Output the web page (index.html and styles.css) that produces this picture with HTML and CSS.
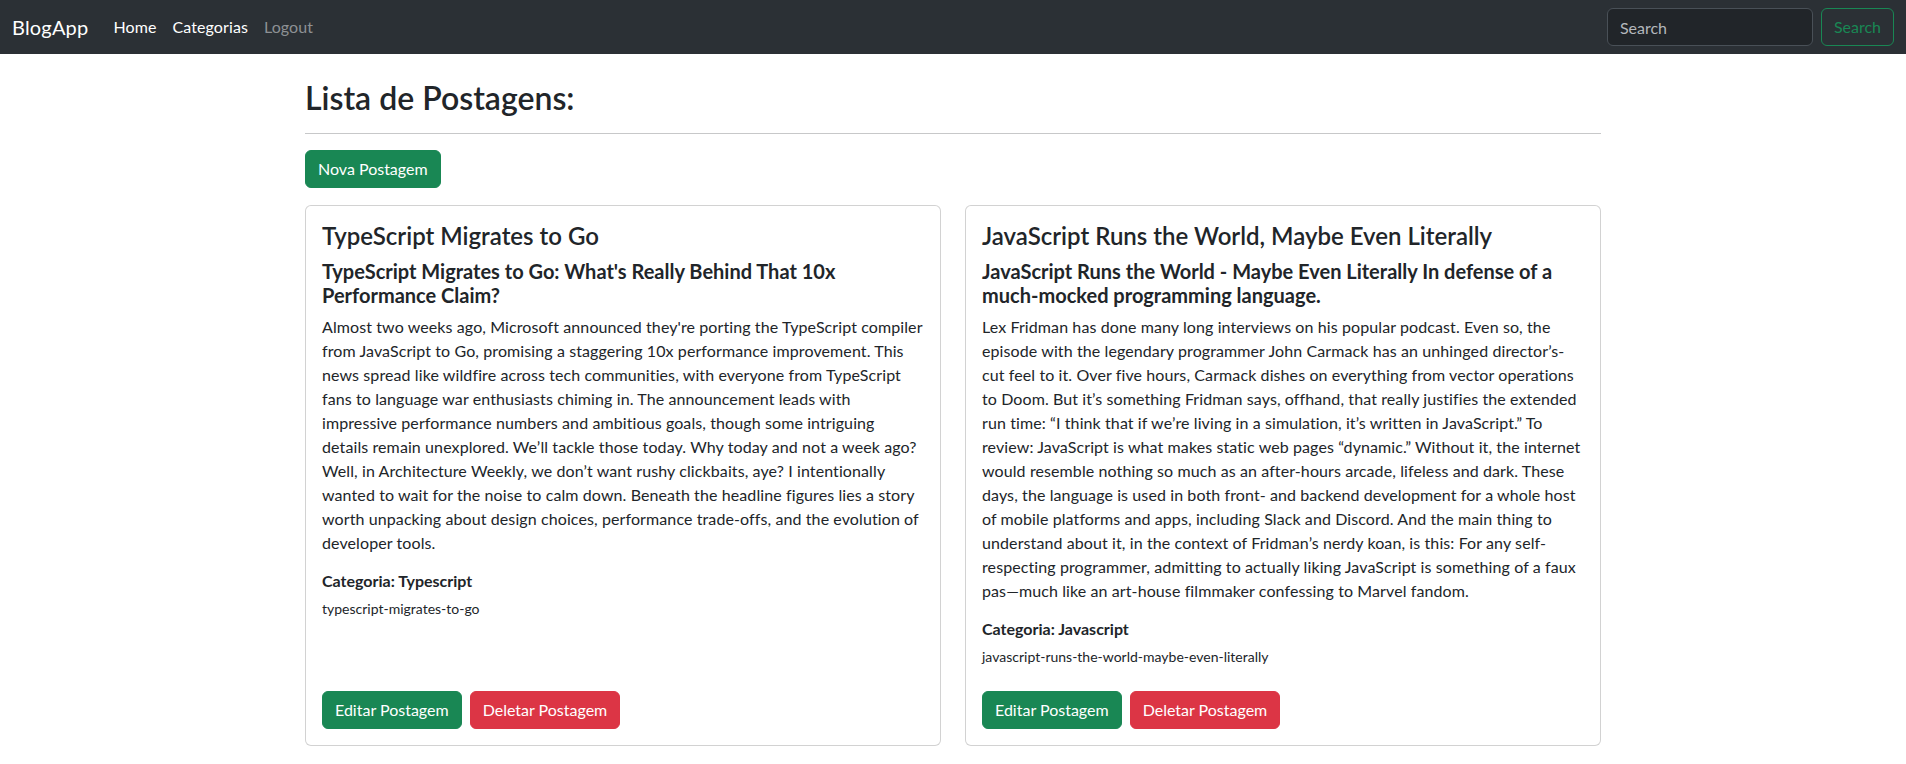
FILE: index.html
```html
<!DOCTYPE html>
<html lang="pt-BR">
<head>
<meta charset="utf-8">
<title>BlogApp</title>
<link rel="stylesheet" href="styles.css">
</head>
<body>
<nav class="navbar">
  <a class="brand" href="#">BlogApp</a>
  <ul class="nav-links">
    <li><a class="nav-link active" href="#">Home</a></li>
    <li><a class="nav-link active" href="#">Categorias</a></li>
    <li><a class="nav-link muted" href="#">Logout</a></li>
  </ul>
  <form class="search">
    <input class="search-input" type="search" placeholder="Search">
    <button class="btn btn-outline-success" type="button">Search</button>
  </form>
</nav>

<main class="container">
  <h2 class="page-title">Lista de Postagens:</h2>
  <hr class="divider">
  <a class="btn btn-success" href="#">Nova Postagem</a>

  <div class="posts">
    <article class="card">
      <div class="card-body">
        <h4 class="card-title">TypeScript Migrates to Go</h4>
        <h5 class="card-subtitle">TypeScript Migrates to Go: What's Really Behind That 10x Performance Claim?</h5>
        <p class="card-text">Almost two weeks ago, Microsoft announced they're porting the TypeScript compiler from JavaScript to Go, promising a staggering 10x performance improvement. This news spread like wildfire across tech communities, with everyone from TypeScript fans to language war enthusiasts chiming in. The announcement leads with impressive performance numbers and ambitious goals, though some intriguing details remain unexplored. We’ll tackle those today. Why today and not a week ago? Well, in Architecture Weekly, we don’t want rushy clickbaits, aye? I intentionally wanted to wait for the noise to calm down. Beneath the headline figures lies a story worth unpacking about design choices, performance trade-offs, and the evolution of developer tools.</p>
        <h6 class="card-category">Categoria: Typescript</h6>
        <div class="card-slug">typescript-migrates-to-go</div>
        <div class="card-actions">
          <a class="btn btn-success" href="#">Editar Postagem</a>
          <a class="btn btn-danger" href="#">Deletar Postagem</a>
        </div>
      </div>
    </article>

    <article class="card">
      <div class="card-body">
        <h4 class="card-title">JavaScript Runs the World, Maybe Even Literally</h4>
        <h5 class="card-subtitle">JavaScript Runs the World - Maybe Even Literally In defense of a much-mocked programming language.</h5>
        <p class="card-text">Lex Fridman has done many long interviews on his popular podcast. Even so, the episode with the legendary programmer John Carmack has an unhinged director’s-cut feel to it. Over five hours, Carmack dishes on everything from vector operations to Doom. But it’s something Fridman says, offhand, that really justifies the extended run time: “I think that if we’re living in a simulation, it’s written in JavaScript.” To review: JavaScript is what makes static web pages “dynamic.” Without it, the internet would resemble nothing so much as an after-hours arcade, lifeless and dark. These days, the language is used in both front- and backend development for a whole host of mobile platforms and apps, including Slack and Discord. And the main thing to understand about it, in the context of Fridman’s nerdy koan, is this: For any self-respecting programmer, admitting to actually liking JavaScript is something of a faux pas—much like an art-house filmmaker confessing to Marvel fandom.</p>
        <h6 class="card-category">Categoria: Javascript</h6>
        <div class="card-slug">javascript-runs-the-world-maybe-even-literally</div>
        <div class="card-actions">
          <a class="btn btn-success" href="#">Editar Postagem</a>
          <a class="btn btn-danger" href="#">Deletar Postagem</a>
        </div>
      </div>
    </article>

    <article class="card">
      <div class="card-body">
        <h4 class="card-title">Rust in the Linux Kernel</h4>
        <h5 class="card-subtitle">Rust in the Linux Kernel: Where Things Stand</h5>
        <p class="card-text">A look at the state of Rust support in the Linux kernel.</p>
        <h6 class="card-category">Categoria: Rust</h6>
        <div class="card-slug">rust-in-the-linux-kernel</div>
        <div class="card-actions">
          <a class="btn btn-success" href="#">Editar Postagem</a>
          <a class="btn btn-danger" href="#">Deletar Postagem</a>
        </div>
      </div>
    </article>

    <article class="card">
      <div class="card-body">
        <h4 class="card-title">Python 3.13 Released</h4>
        <h5 class="card-subtitle">Python 3.13 Released: What's New</h5>
        <p class="card-text">An overview of the new features in Python 3.13.</p>
        <h6 class="card-category">Categoria: Python</h6>
        <div class="card-slug">python-3-13-released</div>
        <div class="card-actions">
          <a class="btn btn-success" href="#">Editar Postagem</a>
          <a class="btn btn-danger" href="#">Deletar Postagem</a>
        </div>
      </div>
    </article>
  </div>
</main>
</body>
</html>
```

FILE: styles.css
```css
* { box-sizing: border-box; }

html, body {
  margin: 0;
  padding: 0;
}

body {
  font-family: "Segoe UI", Lato, "Liberation Sans", sans-serif;
  font-size: 16px;
  line-height: 1.5;
  color: #212529;
  background: #fff;
}

a { text-decoration: none; }

/* Navbar */
.navbar {
  display: flex;
  align-items: center;
  height: 54px;
  padding: 8px 12px;
  background: #2b3035;
}

.brand {
  font-size: 20px;
  line-height: 30px;
  padding: 5px 0;
  margin-right: 17px;
  color: #fff;
  letter-spacing: 0.2px;
}

.nav-links {
  display: flex;
  list-style: none;
  margin: 0;
  padding: 0;
  flex: 1;
}

.nav-link {
  display: block;
  padding: 8px;
  font-size: 16px;
  line-height: 24px;
  letter-spacing: 0.1px;
}

.nav-link.active { color: #fff; }
.nav-link.muted { color: #8d9094; }

.search {
  display: flex;
  align-items: center;
}

.search-input {
  width: 206px;
  height: 38px;
  margin-right: 8px;
  padding: 6px 12px;
  font-family: inherit;
  font-size: 16px;
  color: #dee2e6;
  background: #212529;
  border: 1px solid #495057;
  border-radius: 6px;
  outline: none;
}

.search-input::placeholder { color: #b4b8bc; }

/* Buttons */
.btn {
  display: inline-block;
  padding: 6px 12px;
  font-family: inherit;
  font-size: 16px;
  line-height: 24px;
  border: 1px solid transparent;
  border-radius: 6px;
  color: #fff;
  cursor: pointer;
}

.btn-success { background: #198754; border-color: #198754; }
.btn-danger { background: #dc3545; border-color: #dc3545; }
.btn-outline-success {
  background: transparent;
  color: #198754;
  border-color: #198754;
}

/* Layout */
.container {
  max-width: 1320px;
  margin: 0 auto;
  padding: 25px 12px 0;
}

.page-title {
  margin: 0 0 8px;
  font-size: 32px;
  font-weight: 600;
  line-height: 1.2;
}

.divider {
  margin: 16px 0;
  border: 0;
  border-top: 1px solid #212529;
  opacity: 0.25;
}

.posts {
  display: grid;
  grid-template-columns: 1fr 1fr;
  column-gap: 24px;
  row-gap: 18px;
  margin-top: 17px;
}

.card {
  display: flex;
  flex-direction: column;
  border: 1px solid rgba(0, 0, 0, 0.175);
  border-radius: 6px;
  background: #fff;
}

.card-body {
  flex: 1;
  display: flex;
  flex-direction: column;
  align-items: flex-start;
  padding: 16px;
}

.card-title {
  margin: 0 0 8px;
  font-size: 24px;
  font-weight: 600;
  line-height: 1.2;
}

.card-subtitle {
  margin: 0 0 8px;
  font-size: 20px;
  font-weight: 700;
  line-height: 1.2;
}

.card-text {
  margin: 0 0 16px;
  letter-spacing: 0.1px;
}

.card-category {
  margin: 0 0 8px;
  font-size: 16px;
  font-weight: 700;
  line-height: 1.2;
}

.card-slug {
  margin-bottom: 16px;
  font-size: 14px;
  line-height: 1.5;
}

.card-actions {
  display: flex;
  gap: 8px;
  margin-top: auto;
  padding-top: 8px;
}
```
